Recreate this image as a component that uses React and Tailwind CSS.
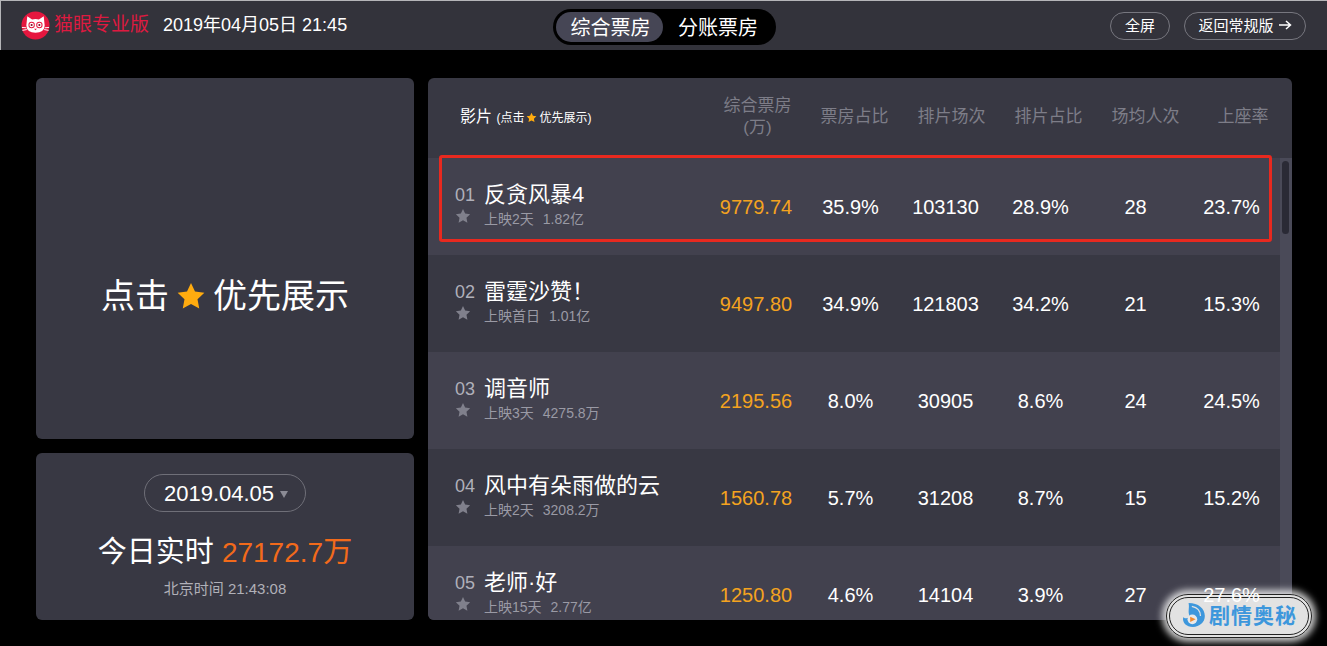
import React from "react";

const rows = [
  { no: "01", name: "反贪风暴4", sub: "上映2天", total: "1.82亿", box: "9779.74", rate: "35.9%", shows: "103130", showRate: "28.9%", avg: "28", seat: "23.7%" },
  { no: "02", name: "雷霆沙赞！", sub: "上映首日", total: "1.01亿", box: "9497.80", rate: "34.9%", shows: "121803", showRate: "34.2%", avg: "21", seat: "15.3%" },
  { no: "03", name: "调音师", sub: "上映3天", total: "4275.8万", box: "2195.56", rate: "8.0%", shows: "30905", showRate: "8.6%", avg: "24", seat: "24.5%" },
  { no: "04", name: "风中有朵雨做的云", sub: "上映2天", total: "3208.2万", box: "1560.78", rate: "5.7%", shows: "31208", showRate: "8.7%", avg: "15", seat: "15.2%" },
  { no: "05", name: "老师·好", sub: "上映15天", total: "2.77亿", box: "1250.80", rate: "4.6%", shows: "14104", showRate: "3.9%", avg: "27", seat: "27.6%" },
];

const heads = ["票房占比", "排片场次", "排片占比", "场均人次", "上座率"];

const Star = ({ className }) => (
  <svg viewBox="0 0 24 24" className={className} fill="currentColor">
    <path d="M12 1.500l3.200 6.900 7.500.9-5.500 5.200 1.400 7.500L12 18.300l-6.600 3.700 1.400-7.500L1.300 9.300l7.500-.9z" />
  </svg>
);

const CatLogo = () => (
  <svg viewBox="0 0 30 30" className="w-[29px] h-[29px] shrink-0">
    <circle cx="15" cy="15" r="14.500" fill="#e5173f" />
    <path d="M6.500 5.500l5 3.300q3.500-.9 7 0l5-3.300 1 9.500q-.5 7.500-9.500 7.500T5.500 15z" fill="#fff" />
    <circle cx="11" cy="14.500" r="3.300" fill="#e5173f" />
    <circle cx="19" cy="14.500" r="3.300" fill="#e5173f" />
    <circle cx="11" cy="14.500" r="2.300" fill="#fff" />
    <circle cx="19" cy="14.500" r="2.300" fill="#fff" />
    <circle cx="11" cy="14.500" r="1.100" fill="#7a1024" />
    <circle cx="19" cy="14.500" r="1.100" fill="#7a1024" />
    <path d="M13.500 18.300h3l-1.500 1.500z" fill="#e5173f" />
    <path d="M1 17l4.500.4M1.500 20l4.500-.8M29 17l-4.500.4M28.500 20l-4.500-.8" stroke="#fff" strokeWidth="1" />
  </svg>
);

const Row = ({ row, odd }) => (
  <div className={`grid grid-cols-[281px_94px_95px_95px_95px_95px_97px] h-[97px] items-center text-white text-[20px] text-center shrink-0 ${odd ? "bg-[#42414e]" : "bg-[#383843]"}`}>
    <div className="flex text-left pl-[27px] pb-[3px]">
      <div className="w-[29px] flex flex-col items-start pt-[2px]">
        <span className="text-[18px] leading-[24px] text-[#b0b0ba]">{row.no}</span>
        <Star className="w-[16px] h-[16px] text-[#80808c] mt-[1px]" />
      </div>
      <div className="flex flex-col">
        <span className="text-[22px] leading-[28px] whitespace-nowrap">{row.name}</span>
        <span className="text-[14px] leading-[20px] text-[#9a9aa5] whitespace-nowrap">
          {row.sub}<span className="ml-[9px]">{row.total}</span>
        </span>
      </div>
    </div>
    <div className="text-[#f4a31f]">{row.box}</div>
    <div>{row.rate}</div>
    <div>{row.shows}</div>
    <div>{row.showRate}</div>
    <div>{row.avg}</div>
    <div className="relative z-10">{row.seat}</div>
  </div>
);

export default function App() {
  return (
    <div className="relative w-[1327px] h-[646px] overflow-hidden bg-black font-['Liberation_Sans','Noto_Sans_CJK_SC',sans-serif]">
      <header className="h-[50px] bg-[#33333b] border-t border-l border-[#b5b5b8] flex items-center justify-between pl-[20px] pr-[21px] relative">
        <div className="flex items-center">
          <CatLogo />
          <span className="ml-[4px] text-[19px] text-[#dd1a40] whitespace-nowrap">猫眼专业版</span>
          <span className="ml-[14px] text-[18px] text-white whitespace-nowrap">2019年04月05日 21:45</span>
        </div>
        <div className="absolute left-[552px] top-[8px] w-[223px] h-[36px] rounded-full bg-black flex items-center px-[3px] text-[20px] text-white">
          <span className="w-[107px] h-[30px] rounded-full bg-[#464655] flex items-center justify-center pt-[1px] pl-[2px]">综合票房</span>
          <span className="ml-[15px] pt-[1px]">分账票房</span>
        </div>
        <div className="flex items-center gap-[14px] text-[15px] text-white">
          <span className="w-[60px] h-[28px] rounded-full border border-[#77777f] flex items-center justify-center pt-[1px]">全屏</span>
          <span className="w-[122px] h-[28px] rounded-full border border-[#77777f] flex items-center justify-center whitespace-nowrap pt-[1px]">
            返回常规版
            <svg viewBox="0 0 14 12" className="w-[14px] h-[12px] ml-[4px] mb-[2px]" fill="none" stroke="#fff" strokeWidth="1.500">
              <path d="M1 6h11M8 2l4.500 4L8 10" />
            </svg>
          </span>
        </div>
      </header>

      <main className="flex pt-[28px] pl-[36px] gap-[14px] h-[570px]">
        <div className="w-[378px] flex flex-col gap-[14px]">
          <div className="h-[361px] rounded-[6px] bg-[#383843] flex items-center justify-center pt-[75px] text-[34px] text-white">
            点击<Star className="w-[30px] h-[30px] text-[#ffab0f] mx-[7px]" />优先展示
          </div>
          <div className="h-[167px] rounded-[6px] bg-[#383843] flex flex-col items-center pt-[21px] text-white">
            <div className="w-[162px] h-[38px] rounded-full border border-[#6f6f78] flex items-center justify-center text-[22px] pl-[2px]">
              2019.04.05
              <span className="ml-[6px] w-0 h-0 border-x-[4px] border-x-transparent border-t-[7px] border-t-[#8b8b95] mt-[3px]"></span>
            </div>
            <div className="mt-[20px] text-[29px] leading-[40px] whitespace-nowrap">
              今日实时 <span className="text-[#f26a1b]"><span className="text-[28px]">27172.7</span>万</span>
            </div>
            <div className="mt-[6px] text-[15px] leading-[20px] text-[#b0b0b8]">北京时间 21:43:08</div>
          </div>
        </div>

        <div className="relative w-[864px] h-[542px] rounded-[6px] overflow-hidden bg-[#383843] flex flex-col">
          <div className="h-[80px] shrink-0 pb-[3px] grid grid-cols-[281px_97px_97px_97px_97px_97px_98px] items-center text-center text-[17px] leading-[22px] text-[#7d7d88]">
            <div className="text-left pl-[32px] pt-[2px] text-white text-[16px] whitespace-nowrap">
              影片 <span className="text-[12px]">(点击<Star className="inline w-[11px] h-[11px] text-[#ffab0f] align-[-1px] mx-[2px]" />优先展示)</span>
            </div>
            <div>综合票房<br />(万)</div>
            {heads.map((h) => (
              <div key={h}>{h}</div>
            ))}
          </div>
          <div className="flex flex-1 min-h-0">
            <div className="w-[852px] flex flex-col">
              {rows.map((row, i) => (
                <Row key={row.no} row={row} odd={i % 2 === 0} />
              ))}
            </div>
            <div className="w-[12px] bg-[#4a4a58] pt-[3px] pl-[2px]">
              <div className="w-[7px] h-[73px] rounded-full bg-[#2a2a35]"></div>
            </div>
          </div>
          <div className="absolute left-[11px] top-[77px] w-[833px] h-[87px] rounded-[3px] border-[3px] border-[#e8291f]"></div>
        </div>
      </main>

      {/* watermark sits on top of the page corner */}
      <div className="absolute left-[1166px] top-[594px] w-[146px] h-[44px] rounded-full bg-[#e2e2e2] shadow-[0_0_7px_4px_rgba(255,255,255,0.8)] flex items-center justify-center">
        <div className="absolute inset-0 rounded-full border border-[#222]"></div>
        <div className="absolute inset-[3px] rounded-full border border-[#222]"></div>
        <svg viewBox="0 0 24 24" className="relative w-[26px] h-[30px] shrink-0 -mt-[2px]">
          <path d="M7 1c9 0 15 5 15 12 0 6-5 10-11 10C5 23 1 19 2 14c3 2 5 1 6-1C6 9 8 6 7 1z" fill="#3d97dc" />
          <path d="M10 4c5 1 8 4 8 9" fill="none" stroke="#e2e2e2" strokeWidth="1.200" />
          <circle cx="10.500" cy="16" r="4.500" fill="#e9e9e9" />
          <path d="M8.500 13.500l5 2.500-5 2.500z" fill="#f28a2e" />
        </svg>
        <span className="relative ml-[2px] text-[21px] font-bold text-[#3d97dc] tracking-[1px] whitespace-nowrap">剧情奥秘</span>
      </div>
    </div>
  );
}
